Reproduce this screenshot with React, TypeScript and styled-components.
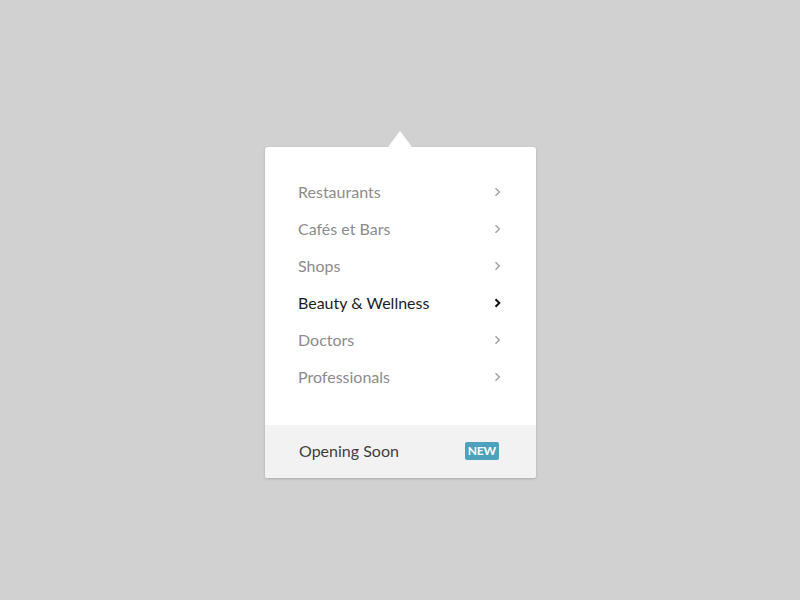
import React from "react";
import styled, { createGlobalStyle } from "styled-components";

const Global = createGlobalStyle`
  html, body { margin: 0; padding: 0; background: #d1d1d1; }
  body { font-family: Lato, "Open Sans", sans-serif; -webkit-font-smoothing: antialiased; }
`;

const Page = styled.div`
  width: 800px;
  height: 600px;
  display: flex;
  justify-content: center;
  padding-top: 147px;
  box-sizing: border-box;
`;

const Card = styled.div`
  position: relative;
  width: 271px;
  height: 331px;
  background: #fff;
  border-radius: 3px;
  box-shadow: 0 1px 3px rgba(0, 0, 0, 0.18);
  display: flex;
  flex-direction: column;
  margin-left: 1px;
`;

const Caret = styled.div`
  position: absolute;
  top: -16px;
  left: 123px;
  width: 0;
  height: 0;
  border-left: 12px solid transparent;
  border-right: 12px solid transparent;
  border-bottom: 16px solid #fff;
`;

const List = styled.ul`
  list-style: none;
  margin: 0;
  padding: 26px 35px 0 33px;
  flex: 1;
`;

const Row = styled.li<{ $active?: boolean }>`
  height: 37px;
  display: flex;
  align-items: center;
  justify-content: space-between;
  font-size: 16px;
  color: ${(p) => (p.$active ? "#1c1c1c" : "#8c8c8c")};
`;

const Chevron = styled.svg`
  width: 7px;
  height: 10px;
  display: block;
`;

const Footer = styled.div`
  height: 53px;
  background: #f2f2f2;
  border-radius: 0 0 3px 3px;
  display: flex;
  align-items: center;
  justify-content: space-between;
  padding: 0 37px 2px 34px;
  box-sizing: border-box;
  font-size: 16px;
  color: #3e3e3e;
`;

const Badge = styled.span`
  background: #4da2bd;
  color: #fff;
  font-size: 12px;
  font-weight: 700;
  border-radius: 2px;
  padding: 0 3px;
  height: 18px;
  line-height: 18px;
  letter-spacing: -0.2px;
`;

const items = [
  "Restaurants",
  "Cafés et Bars",
  "Shops",
  "Beauty & Wellness",
  "Doctors",
  "Professionals",
];

export default function App() {
  return (
    <>
      <Global />
      <Page>
        <Card>
          <Caret />
          <List>
            {items.map((it) => {
              const active = it === "Beauty & Wellness";
              return (
                <Row key={it} $active={active}>
                  <span>{it}</span>
                  <Chevron viewBox="0 0 7 10">
                    <path
                      d="M1.5 1.2 L5.3 5 L1.5 8.8"
                      fill="none"
                      stroke={active ? "#111" : "#a3a3a3"}
                      strokeWidth={active ? 2 : 1.5}
                    />
                  </Chevron>
                </Row>
              );
            })}
          </List>
          <Footer>
            <span>Opening Soon</span>
            <Badge>NEW</Badge>
          </Footer>
        </Card>
      </Page>
    </>
  );
}
